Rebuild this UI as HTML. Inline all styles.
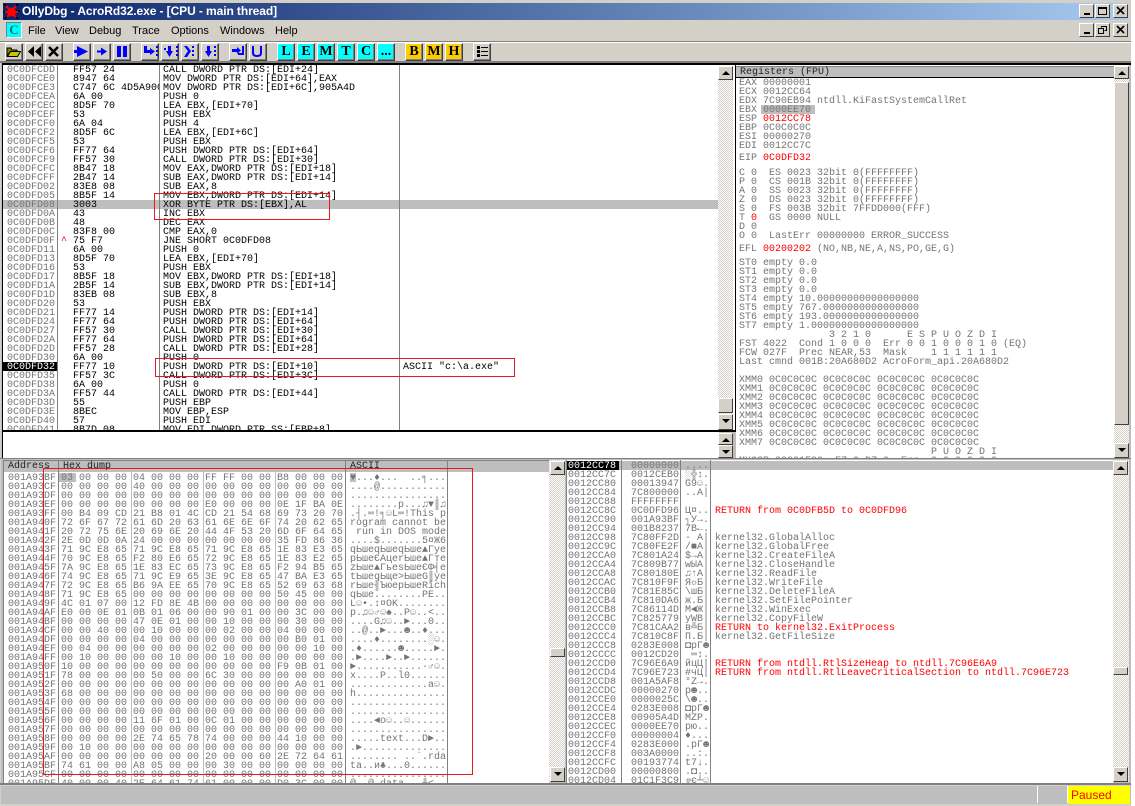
<!DOCTYPE html>
<html><head><meta charset="utf-8"><title>OllyDbg</title>
<style>
html,body{margin:0;padding:0;background:#fff;width:1135px;height:806px;overflow:hidden}
div,pre,span.a{position:absolute}
#w{left:0;top:0;width:1131px;height:806px;background:#d4d0c8;overflow:hidden}
pre{margin:-1px 0 0;padding:2px 0;font:10px/9px "Liberation Mono","DejaVu Sans Mono",monospace;white-space:pre;overflow:hidden;color:#747474}
.k{color:#000}
.r{color:#f00}
.m{font:11px/14px "Liberation Sans",sans-serif;color:#000;top:24px}
.b{width:16px;height:16px;top:43px;background:#d4d0c8;border:1px solid;border-color:#fff #404040 #404040 #fff;box-shadow:inset -1px -1px 0 #808080}
.c{background:#0ff;font:bold 14px/16px "Liberation Serif",serif;text-align:center;color:#000}
.y{background:#fc0;font:bold 14px/16px "Liberation Serif",serif;text-align:center;color:#000}
.w{width:13px;height:12px;background:#d4d0c8;border:1px solid;border-color:#fff #404040 #404040 #fff}
.s{background:conic-gradient(#fff 25%,#d4d0c8 0 50%,#fff 0 75%,#d4d0c8 0) 0 0/2px 2px}
.u,.d,.t{background:#d4d0c8;border:1px solid;border-color:#fff #404040 #404040 #fff;box-sizing:border-box}
.u:after,.d:after{content:"";position:absolute;left:3px;top:4px;border:4px solid transparent;border-width:0 4px 4px}
.u:after{border-bottom-color:#000}
.d:after{border-width:4px 4px 0;border-top-color:#000}
.v{background:#808080;width:1px}
.l{background:#bebebe;width:1px}
.h{background:#bebebe;font:10px/11px "Liberation Mono","DejaVu Sans Mono",monospace;color:#222;border-right:1px solid #808080;border-top:1px solid #808080;box-sizing:border-box;white-space:pre;padding-left:4px}
.x{border:1px solid #e81818;box-sizing:border-box}
</style></head><body>
<div id="w">
<!-- title -->
<div style="left:3px;top:3px;width:1125px;height:17px;background:linear-gradient(90deg,#0a246a,#a6caf0)"></div>
<svg style="position:absolute;left:3px;top:3px" width="18" height="17" viewBox="0 0 18 17"><path d="M1 1l5 5M15 1l-5 5M0 9h5M17 8h-5M2 16l4-5M15 16l-4-5" stroke="#000" stroke-width="1.300" fill="none"/><path d="M3 3l3 3M13 3l-3 3M2 9h4M15 9h-4M4 14l3-3M13 14l-3-3" stroke="#f00" stroke-width="2"/><ellipse cx="8.500" cy="9" rx="4.500" ry="4.500" fill="#f00"/></svg>
<div style="left:22px;top:3px;height:17px;font:bold 12px/17px 'Liberation Sans',sans-serif;letter-spacing:-.09px;color:#fff;white-space:pre">OllyDbg - AcroRd32.exe - [CPU - main thread]</div>
<div class="w" style="left:1079px;top:4px"><div style="left:4px;top:8px;width:6px;height:2px;background:#000"></div></div>
<div class="w" style="left:1095px;top:4px"><div style="left:2px;top:2px;width:7px;height:5px;border:1px solid #000;border-top-width:2px"></div></div>
<div class="w" style="left:1113px;top:4px"><svg style="position:absolute;left:2px;top:1px" width="9" height="9"><path d="M1 1l7 7M8 1l-7 7" stroke="#000" stroke-width="1.700"/></svg></div>
<!-- menu -->
<div style="left:6px;top:22px;width:16px;height:16px;background:#0ff;border:1px solid;border-color:#808080 #fff #fff #808080;box-sizing:border-box;font:bold 13px/14px 'Liberation Serif',serif;text-align:center;color:#087878">C</div>
<div class="m" style="left:28px">File</div>
<div class="m" style="left:55px">View</div>
<div class="m" style="left:89px">Debug</div>
<div class="m" style="left:132px">Trace</div>
<div class="m" style="left:171px">Options</div>
<div class="m" style="left:220px">Windows</div>
<div class="m" style="left:275px">Help</div>
<div class="w" style="left:1079px;top:23px"><div style="left:4px;top:8px;width:6px;height:2px;background:#000"></div></div>
<div class="w" style="left:1095px;top:23px"><svg style="position:absolute;left:2px;top:1px" width="9" height="9" fill="none" stroke="#000"><path d="M3.500 2.500v-1h5v4h-2M.5 3.500h5v5h-5z"/><path d="M1 3.500h4M3 1.500h5"/></svg></div>
<div class="w" style="left:1113px;top:23px"><svg style="position:absolute;left:2px;top:1px" width="9" height="9"><path d="M1 1l7 7M8 1l-7 7" stroke="#000" stroke-width="1.700"/></svg></div>
<div style="left:0;top:41px;width:1131px;height:1px;background:#808080"></div>
<div style="left:0;top:42px;width:1131px;height:1px;background:#fff"></div>
<!-- toolbar -->
<div class="b" style="left:5px"></div><div class="b" style="left:25px"></div><div class="b" style="left:45px"></div>
<div class="b" style="left:73px"></div><div class="b" style="left:93px"></div><div class="b" style="left:113px"></div>
<div class="b" style="left:141px"></div><div class="b" style="left:161px"></div><div class="b" style="left:181px"></div><div class="b" style="left:201px"></div>
<div class="b" style="left:229px"></div><div class="b" style="left:249px"></div>
<div class="b c" style="left:277px">L</div><div class="b c" style="left:297px">E</div><div class="b c" style="left:317px">M</div><div class="b c" style="left:337px">T</div><div class="b c" style="left:357px">C</div><div class="b c" style="left:377px">...</div>
<div class="b y" style="left:405px">B</div><div class="b y" style="left:425px">M</div><div class="b y" style="left:445px">H</div>
<div class="b" style="left:473px"></div>
<svg style="position:absolute;left:0;top:0" width="500" height="62">
<path d="M7 56V48h4l1 2h5v2H10l-3 4z" fill="#808000" stroke="#000"/><path d="M7.500 56.500l3-5h10l-3 5z" fill="#c8c800" stroke="#000"/>
<path d="M34 46v11l-6-5.500zM41 46v11l-6-5.500z" fill="#000"/>
<path d="M49 47l9 9M58 47l-9 9" stroke="#000" stroke-width="2.500"/>
<g fill="#00f">
<path d="M77 46l11 5.500-11 5.500zM74 50h4v3h-4z"/>
<path d="M101 47.500l6 4-6 4zM97 50.500h5v2h-5z"/>
<path d="M117 46h4v11h-4zM123 46h4v11h-4z"/>
<path d="M144 46h3v4h3v-2l5 3.500-5 3.500v-2h-6z"/><path d="M156 46h2v2h-2zM156 50h2v2h-2zM156 54h2v2h-2z"/>
<path d="M168 46h3v5h2l-3.500 6-3.500-6h2zM164 48h2v2h-2z"/><path d="M176 46h2v2h-2zM176 50h2v2h-2zM176 54h2v2h-2z"/>
<path d="M184 46h3l4 5-4 6h-3l4-6zM192 46h2v2h-2zM192 50h2v2h-2zM192 54h2v2h-2z"/>
<path d="M207 46h3v5h2l-3.500 6-3.500-6h2zM214 46h2v2h-2zM214 50h2v2h-2zM214 54h2v2h-2z"/>
<path d="M232 49h5v-2l4 3.500-4 3.500v-2h-5zM242 46h2v9h-6v-2h4z"/>
</g>
<path d="M253 46v7q0 3 4 3t4-3v-7" fill="none" stroke="#00f" stroke-width="2"/>
<path d="M477 46h3v3h-3zM477 50h3v3h-3zM477 54h3v3h-3zM481 47h7v1h-7zM481 51h7v1h-7zM481 55h7v1h-7z" fill="#000"/>
</svg>
<div style="left:0;top:61px;width:1131px;height:2px;background:#808080"></div>

<!-- CPU disasm pane -->
<div style="left:1px;top:63px;width:1130px;height:720px;background:#bebebe"></div>
<div style="left:2px;top:63px;width:734px;height:369px;background:#000"></div>
<div style="left:3px;top:65px;width:732px;height:365px;background:#fff;overflow:hidden">
<div style="left:0;top:135px;width:715px;height:9px;background:#bebebe"></div>
<div style="left:0;top:297px;width:54px;height:9px;background:#000"></div>
<div class="v" style="left:54px;top:0;height:365px"></div>
<div class="v" style="left:156px;top:0;height:365px"></div>
<div class="v" style="left:396px;top:0;height:365px"></div>
<pre style="left:4px;top:0;width:50px;height:365px">0C0DFCDD
0C0DFCE0
0C0DFCE3
0C0DFCEA
0C0DFCEC
0C0DFCEF
0C0DFCF0
0C0DFCF2
0C0DFCF5
0C0DFCF6
0C0DFCF9
0C0DFCFC
0C0DFCFF
0C0DFD02
0C0DFD05
0C0DFD08
0C0DFD0A
0C0DFD0B
0C0DFD0C
0C0DFD0F
0C0DFD11
0C0DFD13
0C0DFD16
0C0DFD17
0C0DFD1A
0C0DFD1D
0C0DFD20
0C0DFD21
0C0DFD24
0C0DFD27
0C0DFD2A
0C0DFD2D
0C0DFD30
<span style="color:#fff">0C0DFD32</span>
0C0DFD35
0C0DFD38
0C0DFD3A
0C0DFD3D
0C0DFD3E
0C0DFD40
0C0DFD41</pre>
<pre class="k" style="left:70px;top:0;width:86px;height:365px">FF57 24
8947 64
C747 6C 4D5A9000
6A 00
8D5F 70
53
6A 04
8D5F 6C
53
FF77 64
FF57 30
8B47 18
2B47 14
83E8 08
8B5F 14
3003
43
48
83F8 00
75 F7
6A 00
8D5F 70
53
8B5F 18
2B5F 14
83EB 08
53
FF77 14
FF77 64
FF57 30
FF77 64
FF57 28
6A 00
FF77 10
FF57 3C
6A 00
FF57 44
55
8BEC
57
8B7D 08</pre>
<pre class="r" style="left:58px;top:171px;width:8px;height:10px">^</pre>
<pre class="k" style="left:160px;top:0;width:236px;height:365px">CALL DWORD PTR DS:[EDI+24]
MOV DWORD PTR DS:[EDI+64],EAX
MOV DWORD PTR DS:[EDI+6C],905A4D
PUSH 0
LEA EBX,[EDI+70]
PUSH EBX
PUSH 4
LEA EBX,[EDI+6C]
PUSH EBX
PUSH DWORD PTR DS:[EDI+64]
CALL DWORD PTR DS:[EDI+30]
MOV EAX,DWORD PTR DS:[EDI+18]
SUB EAX,DWORD PTR DS:[EDI+14]
SUB EAX,8
MOV EBX,DWORD PTR DS:[EDI+14]
XOR BYTE PTR DS:[EBX],AL
INC EBX
DEC EAX
CMP EAX,0
JNE SHORT 0C0DFD08
PUSH 0
LEA EBX,[EDI+70]
PUSH EBX
MOV EBX,DWORD PTR DS:[EDI+18]
SUB EBX,DWORD PTR DS:[EDI+14]
SUB EBX,8
PUSH EBX
PUSH DWORD PTR DS:[EDI+14]
PUSH DWORD PTR DS:[EDI+64]
CALL DWORD PTR DS:[EDI+30]
PUSH DWORD PTR DS:[EDI+64]
CALL DWORD PTR DS:[EDI+28]
PUSH 0
PUSH DWORD PTR DS:[EDI+10]
CALL DWORD PTR DS:[EDI+3C]
PUSH 0
CALL DWORD PTR DS:[EDI+44]
PUSH EBP
MOV EBP,ESP
PUSH EDI
MOV EDI,DWORD PTR SS:[EBP+8]</pre>
<pre class="k" style="left:400px;top:297px;width:200px;height:10px">ASCII "c:\a.exe"</pre>
</div>
<!-- disasm scrollbar -->
<div class="s" style="left:718px;top:66px;width:15px;height:364px"></div>
<div class="u" style="left:718px;top:66px;width:15px;height:14px"></div>
<div class="t" style="left:718px;top:398px;width:15px;height:15px"></div>
<div class="d" style="left:718px;top:414px;width:15px;height:16px"></div>
<!-- info pane -->
<div style="left:2px;top:432px;width:716px;height:26px;background:#fff;border-left:1px solid #000"></div>
<div class="u" style="left:718px;top:433px;width:15px;height:12px"></div>
<div class="d" style="left:718px;top:445px;width:15px;height:13px"></div>

<!-- Registers -->
<div style="left:736px;top:63px;width:395px;height:2px;background:#000"></div>
<div style="left:736px;top:65px;width:393px;height:394px;background:#fff;overflow:hidden">
<div class="h" style="left:0;top:1px;width:393px;height:12px;border-right:0;padding-left:4px">Registers (FPU)</div>
<div style="left:0;top:12px;width:393px;height:1px;background:#000"></div>
<div style="left:25px;top:40px;width:54px;height:9px;background:#bebebe"></div>
<pre style="left:3px;top:13px;width:375px;height:72px">EAX 00000001
ECX 0012CC64
EDX 7C90EB94 ntdll.KiFastSystemCallRet
EBX 0000EE70
ESP <span class="r">0012CC78</span>
EBP 0C0C0C0C
ESI 00000270
EDI 0012CC7C</pre>
<pre style="left:3px;top:88px;width:375px;height:10px">EIP <span class="r">0C0DFD32</span></pre>
<pre style="left:3px;top:103px;width:375px;height:72px">C 0  ES 0023 32bit 0(FFFFFFFF)
P 0  CS 001B 32bit 0(FFFFFFFF)
A 0  SS 0023 32bit 0(FFFFFFFF)
Z 0  DS 0023 32bit 0(FFFFFFFF)
S 0  FS 003B 32bit 7FFDD000(FFF)
T <span class="r">0</span>  GS 0000 NULL
D 0
O 0  LastErr 00000000 ERROR_SUCCESS</pre>
<pre style="left:3px;top:179px;width:375px;height:10px">EFL <span class="r">00200202</span> (NO,NB,NE,A,NS,PO,GE,G)</pre>
<pre style="left:3px;top:193px;width:375px;height:108px">ST0 empty 0.0
ST1 empty 0.0
ST2 empty 0.0
ST3 empty 0.0
ST4 empty 10.00000000000000000
ST5 empty 767.0000000000000000
ST6 empty 193.0000000000000000
ST7 empty 1.000000000000000000
               3 2 1 0      E S P U O Z D I
FST 4022  Cond 1 0 0 0  Err 0 0 1 0 0 0 1 0 (EQ)
FCW 027F  Prec NEAR,53  Mask    1 1 1 1 1 1
Last cmnd 001B:20A680D2 AcroForm_api.20A680D2</pre>
<pre style="left:3px;top:310px;width:375px;height:84px">XMM0 0C0C0C0C 0C0C0C0C 0C0C0C0C 0C0C0C0C
XMM1 0C0C0C0C 0C0C0C0C 0C0C0C0C 0C0C0C0C
XMM2 0C0C0C0C 0C0C0C0C 0C0C0C0C 0C0C0C0C
XMM3 0C0C0C0C 0C0C0C0C 0C0C0C0C 0C0C0C0C
XMM4 0C0C0C0C 0C0C0C0C 0C0C0C0C 0C0C0C0C
XMM5 0C0C0C0C 0C0C0C0C 0C0C0C0C 0C0C0C0C
XMM6 0C0C0C0C 0C0C0C0C 0C0C0C0C 0C0C0C0C
XMM7 0C0C0C0C 0C0C0C0C 0C0C0C0C 0C0C0C0C
                                P U O Z D I
MXCSR 00001F80  FZ 0 DZ 0  Err  0 0 0 0 0 0</pre>
</div>
<div class="s" style="left:1114px;top:66px;width:15px;height:392px"></div>
<div class="u" style="left:1114px;top:66px;width:15px;height:13px"></div>
<div class="t" style="left:1114px;top:82px;width:15px;height:343px"></div>
<div class="d" style="left:1114px;top:443px;width:15px;height:15px"></div>

<!-- Dump -->
<div style="left:0;top:458px;width:1131px;height:1px;background:#808080"></div>
<div style="left:3px;top:460px;width:546px;height:323px;background:#fff;overflow:hidden;border-left:1px solid #808080;box-sizing:border-box">
<div class="h" style="left:0;top:0;width:55px;height:12px">Address</div>
<div class="h" style="left:55px;top:0;width:287px;height:12px">Hex dump</div>
<div class="h" style="left:342px;top:0;width:102px;height:12px">ASCII</div>
<div class="h" style="left:444px;top:0;width:101px;height:12px;border-right:0"></div>
<div style="left:54px;top:13px;width:18px;height:9px;background:#bebebe"></div>
<div style="left:346px;top:13px;width:6px;height:9px;background:#bebebe"></div>
<div class="v" style="left:54px;top:12px;height:311px"></div>
<div class="l" style="left:127px;top:12px;height:311px"></div>
<div class="l" style="left:199px;top:12px;height:311px"></div>
<div class="l" style="left:271px;top:12px;height:311px"></div>
<div class="v" style="left:341px;top:12px;height:311px"></div>
<div class="v" style="left:443px;top:12px;height:311px"></div>
<pre style="left:4px;top:13px;width:50px;height:310px">001A93BF
001A93CF
001A93DF
001A93EF
001A93FF
001A940F
001A941F
001A942F
001A943F
001A944F
001A945F
001A946F
001A947F
001A948F
001A949F
001A94AF
001A94BF
001A94CF
001A94DF
001A94EF
001A94FF
001A950F
001A951F
001A952F
001A953F
001A954F
001A955F
001A956F
001A957F
001A958F
001A959F
001A95AF
001A95BF
001A95CF
001A95DF</pre>
<pre style="left:57px;top:13px;width:284px;height:310px">03 00 00 00 04 00 00 00 FF FF 00 00 B8 00 00 00
00 00 00 00 40 00 00 00 00 00 00 00 00 00 00 00
00 00 00 00 00 00 00 00 00 00 00 00 00 00 00 00
00 00 00 00 00 00 00 00 E0 00 00 00 0E 1F BA 0E
00 B4 09 CD 21 B8 01 4C CD 21 54 68 69 73 20 70
72 6F 67 72 61 6D 20 63 61 6E 6E 6F 74 20 62 65
20 72 75 6E 20 69 6E 20 44 4F 53 20 6D 6F 64 65
2E 0D 0D 0A 24 00 00 00 00 00 00 00 35 FD 86 36
71 9C E8 65 71 9C E8 65 71 9C E8 65 1E 83 E3 65
70 9C E8 65 F2 80 E6 65 72 9C E8 65 1E 83 E2 65
7A 9C E8 65 1E 83 EC 65 73 9C E8 65 F2 94 B5 65
74 9C E8 65 71 9C E9 65 3E 9C E8 65 47 BA E3 65
72 9C E8 65 B6 9A EE 65 70 9C E8 65 52 69 63 68
71 9C E8 65 00 00 00 00 00 00 00 00 50 45 00 00
4C 01 07 00 12 FD 8E 4B 00 00 00 00 00 00 00 00
E0 00 0E 01 0B 01 06 00 00 90 01 00 00 3C 00 00
00 00 00 00 47 0E 01 00 00 10 00 00 00 30 00 00
00 00 40 00 00 10 00 00 00 02 00 00 04 00 00 00
00 00 00 00 04 00 00 00 00 00 00 00 00 B0 01 00
00 04 00 00 00 00 00 00 02 00 00 00 00 00 10 00
00 10 00 00 00 00 10 00 00 10 00 00 00 00 00 00
10 00 00 00 00 00 00 00 00 00 00 00 F9 0B 01 00
78 00 00 00 00 50 00 00 6C 30 00 00 00 00 00 00
00 00 00 00 00 00 00 00 00 00 00 00 00 A0 01 00
68 00 00 00 00 00 00 00 00 00 00 00 00 00 00 00
00 00 00 00 00 00 00 00 00 00 00 00 00 00 00 00
00 00 00 00 00 00 00 00 00 00 00 00 00 00 00 00
00 00 00 00 11 6F 01 00 0C 01 00 00 00 00 00 00
00 00 00 00 00 00 00 00 00 00 00 00 00 00 00 00
00 00 00 00 2E 74 65 78 74 00 00 00 44 10 00 00
00 10 00 00 00 00 00 00 00 00 00 00 00 00 00 00
00 00 00 00 00 00 00 00 20 00 00 60 2E 72 64 61
74 61 00 00 A8 05 00 00 00 30 00 00 00 00 00 00
00 00 00 00 00 00 00 00 00 00 00 00 00 00 00 00
40 00 00 40 2E 64 61 74 61 00 00 00 D0 3C 00 00</pre>
<pre style="left:346px;top:13px;width:97px;height:310px">♥...♦...  ..╕...
....@...........
................
........р...♫▼║♫
.┤.═!╕☺L═!This p
rogram cannot be
 run in DOS mode
....$.......5¤Ж6
qЬшeqЬшeqЬшe▲Гуe
pЬшeЄАцerЬшe▲Гтe
zЬшe▲ГьesЬшeЄФ╡e
tЬшeqЬщe>ЬшeG║уe
rЬшe╢ЪюepЬшeRich
qЬшe........PE..
L☺•.↕¤ОK........
р.♫☺♂☺♠..Р☺..<..
....G♫☺..►...0..
..@..►...☻..♦...
....♦........░☺.
.♦......☻.....►.
.►....►..►......
►...........∙♂☺.
x....P..l0......
.............а☺.
h...............
................
................
....◄o☺..☺......
................
.....text...D►..
.►..............
........ ..`.rda
ta..и♣...0......
................
@..@.data...╨<..</pre>
</div>
<div class="s" style="left:549px;top:460px;width:16px;height:322px"></div>
<div class="u" style="left:550px;top:461px;width:15px;height:14px"></div>
<div class="t" style="left:550px;top:648px;width:15px;height:9px"></div>
<div class="d" style="left:550px;top:767px;width:15px;height:15px"></div>

<!-- Stack -->
<div style="left:566px;top:460px;width:547px;height:323px;background:#fff;overflow:hidden;border-left:1px solid #808080;box-sizing:border-box">
<div style="left:0;top:1px;width:546px;height:9px;background:#bebebe"></div>
<div style="left:0;top:1px;width:52px;height:9px;background:#000"></div>
<div class="v" style="left:54px;top:0;height:323px"></div>
<div class="v" style="left:113px;top:0;height:323px"></div>
<div class="v" style="left:143px;top:0;height:323px"></div>
<pre style="left:1px;top:1px;width:53px;height:322px"><span style="color:#fff">0012CC78</span>
0012CC7C
0012CC80
0012CC84
0012CC88
0012CC8C
0012CC90
0012CC94
0012CC98
0012CC9C
0012CCA0
0012CCA4
0012CCA8
0012CCAC
0012CCB0
0012CCB4
0012CCB8
0012CCBC
0012CCC0
0012CCC4
0012CCC8
0012CCCC
0012CCD0
0012CCD4
0012CCD8
0012CCDC
0012CCE0
0012CCE4
0012CCE8
0012CCEC
0012CCF0
0012CCF4
0012CCF8
0012CCFC
0012CD00
0012CD04</pre>
<pre style="left:64px;top:1px;width:49px;height:322px">00000000
0012CEB0
00013947
7C800000
FFFFFFFF
0C0DFD96
001A93BF
001B8237
7C80FF2D
7C80FE2F
7C801A24
7C809B77
7C80180E
7C810F9F
7C81E85C
7C810DA6
7C86114D
7C825779
7C81CAA2
7C810C8F
0283E008
0012CD20
7C96E6A9
7C96E723
001A5AF8
00000270
0000025C
0283E008
00905A4D
0000EE70
00000004
0283E000
003A0000
00193774
00000800
01C1F3C9</pre>
<pre style="left:118px;top:1px;width:25px;height:322px">....
░╬↕.
G9☺.
..А|

Ц¤..
┐У→.
7В←.
- А|
/■А|
$→А|
wЫА|
♫↑А|
Я☼Б|
\шБ|
ж.Б|
M◄Ж|
yWВ|
в╩Б|
П.Б|
◘рГ☻
 ═↕.
йцЦ|
#чЦ|
°Z→.
p☻..
\☻..
◘рГ☻
MZР.
pю..
♦...
.рГ☻
..:.
t7↓.
.◘..
╔є┴☺</pre>
<pre style="left:148px;top:46px;width:398px;height:190px"><span class="r">RETURN from 0C0DFB5D to 0C0DFD96</span>


kernel32.GlobalAlloc
kernel32.GlobalFree
kernel32.CreateFileA
kernel32.CloseHandle
kernel32.ReadFile
kernel32.WriteFile
kernel32.DeleteFileA
kernel32.SetFilePointer
kernel32.WinExec
kernel32.CopyFileW
<span class="r">RETURN to kernel32.ExitProcess</span>
kernel32.GetFileSize


<span class="r">RETURN from ntdll.RtlSizeHeap to ntdll.7C96E6A9</span>
<span class="r">RETURN from ntdll.RtlLeaveCriticalSection to ntdll.7C96E723</span></pre>
</div>
<div class="s" style="left:1113px;top:460px;width:16px;height:322px"></div>
<div class="u" style="left:1113px;top:461px;width:15px;height:14px"></div>
<div class="t" style="left:1113px;top:667px;width:15px;height:8px"></div>
<div class="d" style="left:1113px;top:767px;width:15px;height:15px"></div>

<!-- status -->
<div style="left:0;top:783px;width:1131px;height:2px;background:#808080"></div>
<div style="left:1px;top:785px;width:1130px;height:18px;background:#bebebe;border-top:1px solid #d4d0c8"></div>
<div style="left:1037px;top:786px;width:1px;height:17px;background:#fff"></div>
<div style="left:1067px;top:786px;width:1px;height:17px;background:#fff"></div>
<div style="left:1068px;top:786px;width:62px;height:18px;background:#ff0;font:12px/18px 'Liberation Sans',sans-serif;color:#f00;padding-left:3px;box-sizing:border-box">Paused</div>

<!-- red annotation boxes -->
<div class="x" style="left:154px;top:193px;width:176px;height:27px"></div>
<div class="x" style="left:155px;top:358px;width:360px;height:19px"></div>
<div class="x" style="left:43px;top:468px;width:430px;height:307px"></div>
</div>
</body></html>
